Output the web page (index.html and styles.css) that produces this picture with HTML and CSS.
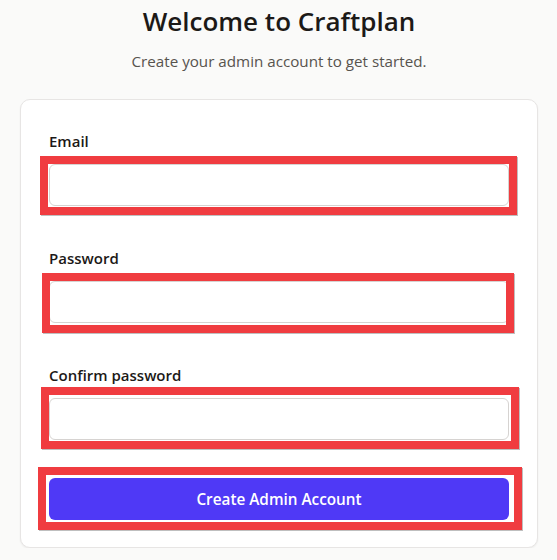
FILE: index.html
```html
<!DOCTYPE html>
<html lang="en">
<head>
<meta charset="utf-8">
<title>Welcome to Craftplan</title>
<link rel="stylesheet" href="styles.css">
</head>
<body>
<main class="page">
  <h1 class="title">Welcome to Craftplan</h1>
  <p class="subtitle">Create your admin account to get started.</p>
  <form class="card">
    <div class="field">
      <label class="label" for="email">Email</label>
      <input class="input" id="email" type="email">
    </div>
    <div class="field">
      <label class="label" for="password">Password</label>
      <input class="input" id="password" type="password">
    </div>
    <div class="field">
      <label class="label" for="confirm">Confirm password</label>
      <input class="input" id="confirm" type="password">
    </div>
    <button class="button" type="button">Create Admin Account</button>
    <span class="mark mark-email"></span>
    <span class="mark mark-password"></span>
    <span class="mark mark-confirm"></span>
    <span class="mark mark-button"></span>
  </form>
</main>
</body>
</html>
```
FILE: styles.css
```css
html, body {
  margin: 0;
  padding: 0;
  background: #fafaf9;
}
body {
  font-family: "Open Sans", "Noto Sans", sans-serif;
  color: #1c1917;
}
.page {
  padding: 3px 19px 0 20px;
}
.title {
  margin: 0;
  text-align: center;
  font-size: 26px;
  line-height: 36px;
  font-weight: 600;
  color: #1c1917;
}
.subtitle {
  margin: 11px 0 0;
  text-align: center;
  font-size: 15.2px;
  line-height: 22px;
  color: #57534e;
}
.card {
  position: relative;
  margin-top: 27px;
  background: #fff;
  border: 1px solid #e7e5e4;
  border-radius: 10px;
  box-shadow: 0 1px 2px rgba(0, 0, 0, 0.06);
  padding: 31px 28px 27px;
  display: flex;
  flex-direction: column;
  gap: 42px;
}
.field {
  display: flex;
  flex-direction: column;
  gap: 13px;
}
.label {
  font-size: 15px;
  line-height: 20px;
  font-weight: 600;
  color: #1c1917;
}
.input {
  box-sizing: border-box;
  height: 42px;
  width: 100%;
  border: 1px solid #d6d3d1;
  border-radius: 6px;
  background: #fff;
  font: inherit;
  margin: 0;
}
.button {
  box-sizing: border-box;
  margin-top: -4px;
  height: 42px;
  width: 100%;
  border: 0;
  border-radius: 6px;
  background: #4f39f6;
  color: #fff;
  font-family: inherit;
  font-size: 15.3px;
  font-weight: 600;
}
.mark {
  position: absolute;
  box-sizing: border-box;
  border: 8px solid #f03c40;
  box-shadow: 1px 1px 0 rgba(0, 0, 0, 0.25);
  pointer-events: none;
}
.mark-email { left: 19px; top: 56px; width: 477px; height: 59px; }
.mark-password { left: 21px; top: 173px; width: 472px; height: 60px; }
.mark-confirm { left: 20px; top: 287px; width: 478px; height: 62px; }
.mark-button { left: 17px; top: 367px; width: 484px; height: 63px; }
```
